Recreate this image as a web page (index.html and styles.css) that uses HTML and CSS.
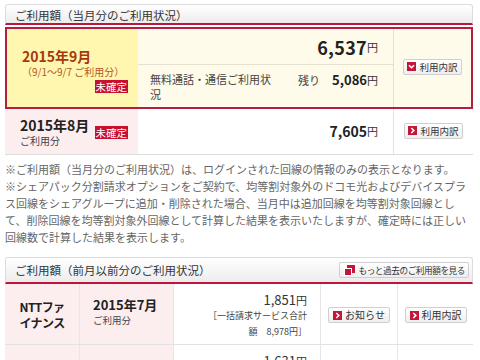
FILE: index.html
```html
<!DOCTYPE html>
<html lang="ja">
<head>
<meta charset="utf-8">
<title>ご利用額</title>
<link rel="stylesheet" href="styles.css">
</head>
<body>
<div class="page">
  <section class="panel">
    <div class="panel-head"><h2 class="panel-title">ご利用額（当月分のご利用状況）</h2></div>
    <div class="cur-row is-current">
      <div class="month-cell">
        <div class="month-title">2015年9月</div>
        <div class="month-sub">（9/1～9/7 ご利用分）</div>
        <div class="badge-line"><span class="badge">未確定</span></div>
      </div>
      <div class="amount-cell">
        <div class="amount-top"><span class="amount-big">6,537</span><span class="yen">円</span></div>
        <div class="amount-bottom">
          <div class="free-label">無料通話・通信ご利用状況</div>
          <div class="remain"><span class="remain-label">残り</span><span class="remain-num">5,086</span><span class="yen">円</span></div>
        </div>
      </div>
      <div class="btn-cell">
        <button class="btn"><svg class="ico" viewBox="0 0 9 9"><rect width="9" height="9" fill="#c4163a"/><path d="M2 3.2 L4.5 5.7 L7 3.2" fill="none" stroke="#fff" stroke-width="1.6"/></svg>利用内訳</button>
      </div>
    </div>
    <div class="cur-row is-prev">
      <div class="month-cell month-cell--prev">
        <div class="month-block">
          <div class="month-title month-title--dark">2015年8月</div>
          <div class="month-sub month-sub--dark">ご利用分</div>
        </div>
        <span class="badge">未確定</span>
      </div>
      <div class="amount-cell amount-cell--prev"><span class="amount-mid">7,605</span><span class="yen">円</span></div>
      <div class="btn-cell btn-cell--prev">
        <button class="btn"><svg class="ico" viewBox="0 0 9 9"><rect width="9" height="9" fill="#c4163a"/><path d="M3.3 2 L5.8 4.5 L3.3 7" fill="none" stroke="#fff" stroke-width="1.6"/></svg>利用内訳</button>
      </div>
    </div>
  </section>

  <p class="notes">※ご利用額（当月分のご利用状況）は、ログインされた回線の情報のみの表示となります。<br>※シェアパック分割請求オプションをご契約で、均等割対象外のドコモ光およびデバイスプラス回線をシェアグループに追加・削除された場合、当月中は追加回線を均等割対象回線として、削除回線を均等割対象外回線として計算した結果を表示いたしますが、確定時には正しい回線数で計算した結果を表示します。</p>

  <section class="panel">
    <div class="panel-head panel-head--tool">
      <h2 class="panel-title">ご利用額（前月以前分のご利用状況）</h2>
      <button class="btn btn--more"><svg class="ico ico--more" viewBox="0 0 11 11"><rect x="3" y="0" width="8" height="8" fill="#c4163a"/><rect x="0.5" y="3.5" width="7" height="7" fill="#c4163a" stroke="#fff" stroke-width="1"/></svg>もっと過去のご利用額を見る</button>
    </div>
    <div class="hist-row">
      <div class="h-company">NTTファイナンス</div>
      <div class="h-month">
        <div class="h-month-title">2015年7月</div>
        <div class="h-month-sub">ご利用分</div>
      </div>
      <div class="h-amount">
        <div class="h-amount-line"><span class="h-num">1,851</span><span class="yen">円</span></div>
        <div class="h-note">［一括請求サービス合計額　8,978円］</div>
      </div>
      <div class="h-btn"><button class="btn btn--hist"><svg class="ico" viewBox="0 0 9 9"><rect width="9" height="9" fill="#c4163a"/><path d="M3.3 2 L5.8 4.5 L3.3 7" fill="none" stroke="#fff" stroke-width="1.6"/></svg>お知らせ</button></div>
      <div class="h-btn"><button class="btn btn--hist"><svg class="ico" viewBox="0 0 9 9"><rect width="9" height="9" fill="#c4163a"/><path d="M3.3 2 L5.8 4.5 L3.3 7" fill="none" stroke="#fff" stroke-width="1.6"/></svg>利用内訳</button></div>
    </div>
    <div class="hist-row">
      <div class="h-company"></div>
      <div class="h-month"></div>
      <div class="h-amount">
        <div class="h-amount-line"><span class="h-num">1,631</span><span class="yen">円</span></div>
      </div>
      <div class="h-btn"></div>
      <div class="h-btn"></div>
    </div>
  </section>
</div>
</body>
</html>
```

FILE: styles.css
```css
* { box-sizing: border-box; }
html, body { margin: 0; padding: 0; background: #fff; }
body {
  font-family: "Noto Sans CJK JP", "Noto Sans", sans-serif;
  color: #333;
  font-size: 11px;
  overflow: hidden;
}
.page { padding: 4px 7px 0 5px; width: 480px; }

.panel-head {
  border: 1px solid #dcdcdc;
  border-bottom: 2px solid #c0143c;
  border-radius: 3px 3px 0 0;
  background: linear-gradient(#ffffff, #ececec);
  padding: 3px 9px 1px;
}
.panel-title {
  margin: 0;
  font-size: 11.5px;
  font-weight: normal;
  line-height: 14px;
  color: #333;
}
.panel-head--tool {
  display: flex;
  align-items: center;
  justify-content: space-between;
  padding: 4px 3px 4px 9px;
}

.cur-row { display: grid; }
.is-current {
  margin-top: 2px;
  border: 2px solid #b41e42;
  grid-template-columns: 131px 1fr 78px;
  height: 82px;
}
.is-prev {
  grid-template-columns: 133px 1fr 80px;
  height: 46px;
  border-bottom: 1px solid #dedede;
}

.month-cell {
  background: #fff7b0;
  padding: 18px 10px 0 15px;
}
.month-title {
  font-size: 14px;
  font-weight: bold;
  line-height: 18px;
  color: #a8380c;
}
.month-sub {
  font-size: 10px;
  line-height: 14px;
  color: #b5552a;
}
.badge-line { display: flex; justify-content: flex-end; margin-top: 1px; }
.badge {
  display: inline-block;
  background: #c8102e;
  color: #fff;
  font-size: 10.5px;
  line-height: 13px;
  padding: 0 1px;
}
.month-cell--prev {
  background: #fcedef;
  display: flex;
  align-items: center;
  justify-content: space-between;
  padding: 0 10px 0 15px;
}
.month-block { padding-top: 1px; }
.month-title--dark { color: #222; }
.month-sub--dark { color: #444; }
.month-cell--prev .badge { margin-top: 2px; }

.amount-cell {
  background: #fefbea;
  display: flex;
  flex-direction: column;
}
.amount-top {
  height: 36px;
  border-bottom: 1px solid #e6e2cf;
  display: flex;
  align-items: center;
  justify-content: flex-end;
  padding-right: 15px;
}
.amount-big { font-size: 18px; font-weight: bold; color: #222; letter-spacing: 0.3px; }
.yen { font-size: 11px; color: #333; }
.amount-bottom {
  flex: 1;
  display: flex;
  justify-content: space-between;
  padding: 7px 15px 0 12px;
}
.free-label { width: 126px; line-height: 15px; color: #444; }
.remain { display: flex; align-items: baseline; line-height: 15px; }
.remain-label { color: #444; margin-right: 12px; }
.remain-num { font-size: 13px; font-weight: bold; color: #222; }

.btn-cell {
  background: #fefbea;
  border-left: 1px solid #e6e2cf;
  display: flex;
  align-items: center;
  justify-content: center;
  padding-bottom: 3px;
}
.btn {
  display: inline-flex;
  align-items: center;
  height: 16px;
  padding: 0 3px 0 3px;
  border: 1px solid #cfcfcf;
  border-radius: 2px;
  background: linear-gradient(#ffffff, #eeeeee);
  font-family: inherit;
  font-size: 9.5px;
  color: #333;
  line-height: 14px;
  white-space: nowrap;
}
.btn--hist { font-size: 10px; padding: 0 4px 0 4px; }
.ico { width: 9px; height: 9px; margin-right: 3px; flex: none; }
.ico--more { width: 11px; height: 11px; }
.btn--more { font-size: 8.6px; padding: 0 3px 0 4px; letter-spacing: -0.4px; height: 16px; }

.amount-cell--prev {
  background: #fff;
  flex-direction: row;
  align-items: center;
  justify-content: flex-end;
  padding-right: 15px;
  padding-bottom: 2px;
}
.amount-mid { font-size: 14px; font-weight: bold; color: #222; }
.btn-cell--prev { background: #fff; border-left: 1px solid #e2e2e2; padding-bottom: 2px; }

.notes {
  margin: 6px 0 11px;
  font-size: 11px;
  line-height: 17px;
  color: #666;
}

.hist-row {
  display: grid;
  grid-template-columns: 74px 94px 147px 77px 1fr;
  height: 61px;
  border-bottom: 1px solid #e2e2e2;
}
.hist-row > div + div { border-left: 1px solid #e6e6e6; }
.h-company {
  background: #fcedef;
  font-size: 12px;
  font-weight: bold;
  color: #222;
  text-align: center;
  line-height: 16px;
  padding: 15px 9px 0;
  letter-spacing: -0.6px;
}
.h-month { background: #fcedef; padding: 13px 0 0 13px; }
.h-month-title { font-size: 13px; font-weight: bold; color: #222; line-height: 16px; }
.h-month-sub { font-size: 9.5px; color: #444; line-height: 14px; }
.h-amount {
  display: flex;
  flex-direction: column;
  align-items: flex-end;
  padding: 8px 13px 0 0;
}
.h-amount-line { line-height: 16px; color: #333; }
.h-num { font-size: 13px; }
.h-note {
  width: 104px;
  font-size: 9px;
  line-height: 16px;
  text-align: right;
  color: #444;
}
.h-btn { display: flex; align-items: center; justify-content: center; padding-top: 2px; }
```
